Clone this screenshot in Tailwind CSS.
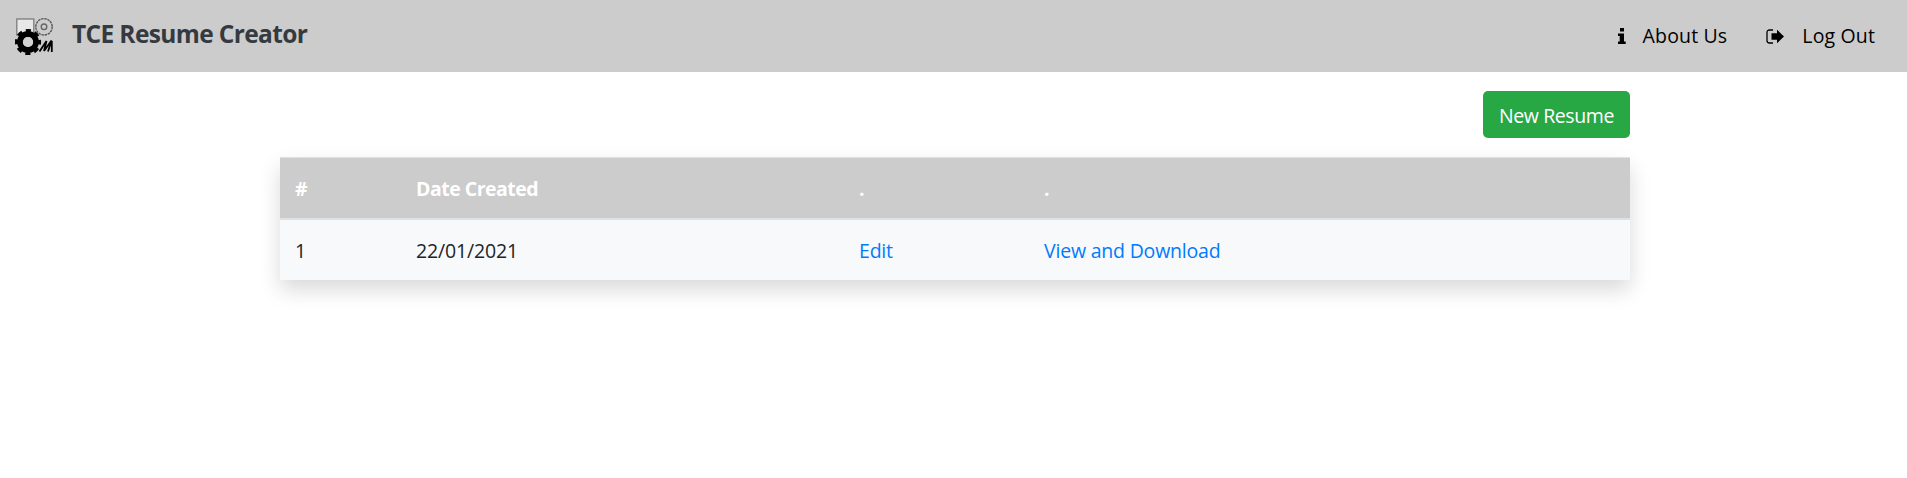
<!DOCTYPE html>
<html lang="en">
<head>
<meta charset="utf-8">
<title>TCE Resume Creator</title>
<script src="https://cdn.jsdelivr.net/npm/@tailwindcss/browser@4"></script>
</head>
<body class="min-h-screen bg-white font-['Segoe_UI','Open_Sans',sans-serif] text-[19.5px] leading-[30px] text-[#212529]">
<nav class="flex h-[72px] items-center justify-between bg-[#cccccc] pr-8 pl-[15px]">
  <a class="flex items-center" href="#">
    <svg class="size-[38px]" viewBox="0 0 38 38" fill="none">
      <rect x="1.800" y="2" width="17" height="16" fill="#e8e8e8" stroke="#7c7c7c" stroke-width="1.300"/>
      <circle cx="29" cy="9.8" r="8.2" stroke="#555" stroke-width="1.4" stroke-dasharray="2.5 0.720"/>
      <circle cx="29" cy="9.8" r="2.8" stroke="#666" stroke-width="1.4"/>
      <circle cx="13" cy="25" r="8" stroke="#000" stroke-width="5.8"/>
      <circle cx="13" cy="25" r="11.3" stroke="#000" stroke-width="3.6" stroke-dasharray="5 3.875" stroke-dashoffset="2.5"/>
      <circle cx="13" cy="25" r="5.1" fill="#d2d2d2"/>
      <path d="M24.500 34.500 31.500 24 29 34 36.500 23.500 33 34.500M36.800 24V35" stroke="#000" stroke-width="1.8"/>
    </svg>
    <span class="ml-[19px] -mt-1 text-[24.5px] font-bold tracking-[-0.63px] text-[#343a40]">TCE Resume Creator</span>
  </a>
  <div class="flex items-center tracking-[0.15px] text-black">
    <a class="flex items-center" href="#">
      <svg class="mr-[17px] h-4 w-2" viewBox="0 0 8 16"><path d="M2 0h4v3.5H2zM0 5.5h6v8h1.7V16H0v-2.5h1.7V8H0z"/></svg>
      <span>About Us</span>
    </a>
    <a class="ml-[39px] flex items-center" href="#">
      <svg class="mr-[18px] h-[15px] w-[18px]" viewBox="0 0 18 15"><path d="M7 1H3.5Q1 1 1 3.5v8Q1 14 3.500 14H7" fill="none" stroke="#000" stroke-width="1.3"/><path d="M11 .7 18 7.500 11 14.300V10.700H5.500V4.300H11z"/></svg>
      <span>Log Out</span>
    </a>
  </div>
</nav>
<main class="ml-[280px] w-[1350px]">
  <div class="flex justify-end pt-[19px]">
    <button class="h-[47px] w-[147px] rounded-[5px] bg-[#28a745] pt-0.5 tracking-[-0.4px] text-white">New Resume</button>
  </div>
  <div class="mt-[19px] bg-[#f8f9fa] shadow-[0_10px_20px_rgba(0,0,0,0.15)]">
  <table class="w-full table-fixed border-separate border-spacing-0 text-left">
    <colgroup><col class="w-[121px]"><col class="w-[443px]"><col class="w-[185px]"><col></colgroup>
    <thead class="bg-[#cccccc] text-white">
      <tr class="h-[63px]">
        <th class="border-t border-b-2 border-[#dee2e6] px-[15px] pt-0.5">#</th>
        <th class="border-t border-b-2 border-[#dee2e6] px-[15px] pt-0.5 tracking-[-0.5px]">Date Created</th>
        <th class="border-t border-b-2 border-[#dee2e6] px-[15px] pt-0.5">.</th>
        <th class="border-t border-b-2 border-[#dee2e6] px-[15px] pt-0.5">.</th>
      </tr>
    </thead>
    <tbody>
      <tr class="h-[60px]">
        <td class="px-[15px] pt-0.5">1</td>
        <td class="px-[15px] pt-0.5 tracking-[-0.15px]">22/01/2021</td>
        <td class="px-[15px] pt-0.5 tracking-[-0.2px]"><a class="text-[#007bff]" href="#">Edit</a></td>
        <td class="px-[15px] pt-0.5 tracking-[-0.2px]"><a class="text-[#007bff]" href="#">View and Download</a></td>
      </tr>
    </tbody>
  </table>
  </div>
</main>
</body>
</html>
